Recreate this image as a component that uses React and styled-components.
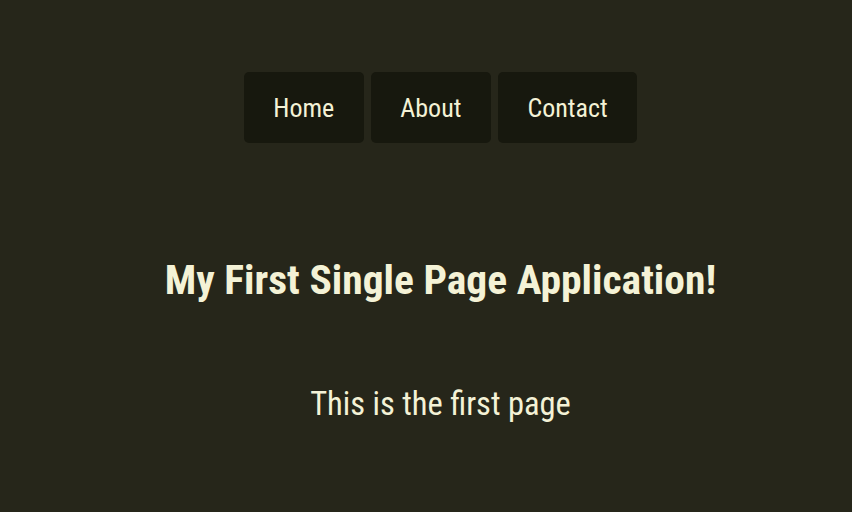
import React from "react";
import styled, { createGlobalStyle } from "styled-components";

const Global = createGlobalStyle`
  html, body { margin: 0; padding: 0; }
  body {
    background: #26261a;
    width: 852px;
    height: 512px;
    overflow: hidden;
    font-family: Roboto, "Liberation Sans", Arial, sans-serif;
    font-stretch: 75%;
    color: #f4f2d6;
  }
`;

const Page = styled.div`
  display: flex;
  flex-direction: column;
  align-items: center;
  padding: 72px 0 0 29px;
  height: 512px;
  box-sizing: border-box;
`;

const Nav = styled.nav`
  display: flex;
  gap: 7px;
`;

const NavButton = styled.a`
  display: flex;
  align-items: center;
  justify-content: center;
  height: 71px;
  padding: 0 29.5px;
  background: #17180e;
  border-radius: 5px;
  font-size: 26px;
  color: #f4f2d6;
  text-decoration: none;
`;

const Title = styled.h1`
  margin: 113px 0 0;
  font-size: 41.5px;
  font-weight: bold;
  line-height: 48px;
`;

const Text = styled.p`
  margin: 79px 0 0;
  font-size: 32.5px;
  line-height: 42px;
`;

export default function App() {
  return (
    <>
      <Global />
      <Page>
        <Nav>
          <NavButton href="#">Home</NavButton>
          <NavButton href="#">About</NavButton>
          <NavButton href="#">Contact</NavButton>
        </Nav>
        <Title>My First Single Page Application!</Title>
        <Text>This is the first page</Text>
      </Page>
    </>
  );
}
